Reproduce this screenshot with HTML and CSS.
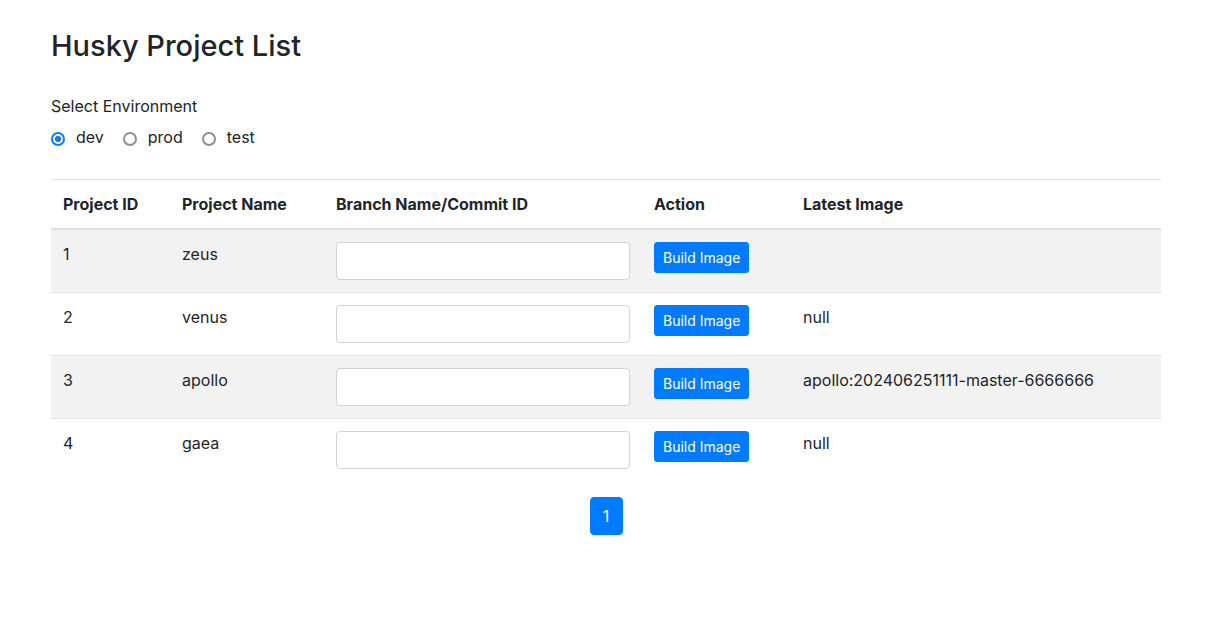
FILE: index.html
```html
<!DOCTYPE html>
<html lang="en">
<head>
<meta charset="utf-8">
<title>Husky Project List</title>
<link rel="stylesheet" href="styles.css">
</head>
<body>
<div class="page">
  <h1 class="title">Husky Project List</h1>
  <div class="env">
    <div class="env-label">Select Environment</div>
    <div class="env-options">
      <label class="radio"><input type="radio" name="env" checked><span>dev</span></label>
      <label class="radio"><input type="radio" name="env"><span>prod</span></label>
      <label class="radio"><input type="radio" name="env"><span>test</span></label>
    </div>
  </div>
  <table class="projects">
    <thead>
      <tr>
        <th class="c-id">Project ID</th>
        <th class="c-name">Project Name</th>
        <th class="c-branch">Branch Name/Commit ID</th>
        <th class="c-action">Action</th>
        <th class="c-image">Latest Image</th>
      </tr>
    </thead>
    <tbody>
      <tr>
        <td>1</td><td>zeus</td>
        <td><input class="field" type="text"></td>
        <td><button class="btn">Build Image</button></td>
        <td></td>
      </tr>
      <tr>
        <td>2</td><td>venus</td>
        <td><input class="field" type="text"></td>
        <td><button class="btn">Build Image</button></td>
        <td>null</td>
      </tr>
      <tr>
        <td>3</td><td>apollo</td>
        <td><input class="field" type="text"></td>
        <td><button class="btn">Build Image</button></td>
        <td>apollo:202406251111-master-6666666</td>
      </tr>
      <tr>
        <td>4</td><td>gaea</td>
        <td><input class="field" type="text"></td>
        <td><button class="btn">Build Image</button></td>
        <td>null</td>
      </tr>
    </tbody>
  </table>
  <div class="pager">
    <button class="page-link">1</button>
  </div>
</div>
</body>
</html>
```
FILE: styles.css
```css
* { box-sizing: border-box; }
html, body { margin: 0; background: #fff; }
body {
  font-family: Inter, "Liberation Sans", sans-serif;
  font-size: 16px;
  line-height: 24px;
  color: #212529;
}
.page {
  width: 1110px;
  margin-left: 51px;
  padding-top: 28px;
}
.title {
  margin: 0 0 30px;
  font-size: 29px;
  line-height: 36px;
  font-weight: 500;
}
.env-label { height: 24px; }
.env-options {
  margin-top: 7px;
  display: flex;
  gap: 19px;
}
.radio {
  display: flex;
  align-items: center;
  gap: 11px;
}
.radio input {
  appearance: none;
  -webkit-appearance: none;
  margin: 3px 0 0 0;
  width: 14px;
  height: 14px;
  border: 2px solid #8e8e93;
  border-radius: 50%;
  background: #fff;
}
.radio input:checked {
  border: 2px solid #0a7aff;
  background: radial-gradient(circle, #0a7aff 0 2.8px, #fff 3.4px);
}
.projects {
  margin-top: 30px;
  width: 1110px;
  border-collapse: collapse;
  table-layout: fixed;
}
.c-id { width: 119px; }
.c-name { width: 154px; }
.c-branch { width: 318px; }
.c-action { width: 149px; }
.c-image { width: 370px; }
.projects th {
  text-align: left;
  font-weight: 700;
  padding: 12px;
  border-top: 1px solid #dee2e6;
  border-bottom: 2px solid #dee2e6;
  vertical-align: bottom;
}
.projects td {
  padding: 12px;
  border-top: 1px solid #dee2e6;
  vertical-align: top;
}
.projects tbody tr:nth-child(odd) { background: #f2f2f2; }
.field {
  display: block;
  width: 100%;
  height: 38px;
  border: 1px solid #ced4da;
  border-radius: 4px;
  background: #fff;
  font: inherit;
}
.btn {
  display: block;
  height: 31px;
  padding: 0 8px;
  border: 1px solid #007bff;
  border-radius: 3px;
  background: #007bff;
  color: #fff;
  font-family: inherit;
  font-size: 14px;
  line-height: 21px;
}
.pager {
  margin-top: 16px;
  display: flex;
  justify-content: center;
}
.page-link {
  width: 33px;
  height: 38px;
  padding: 0;
  border: 1px solid #007bff;
  border-radius: 4px;
  background: #007bff;
  color: #fff;
  font-family: inherit;
  font-size: 16px;
}
```
